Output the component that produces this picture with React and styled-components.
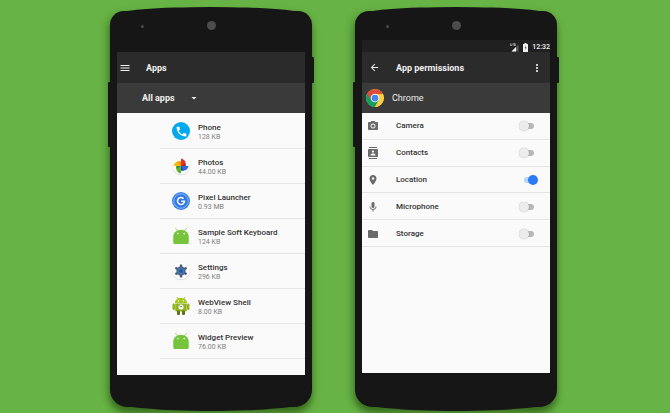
import React from "react";
import styled, { createGlobalStyle, css } from "styled-components";
import {
  MdMenu,
  MdArrowBack,
  MdMoreVert,
  MdArrowDropDown,
  MdCameraAlt,
  MdContacts,
  MdPlace,
  MdMic,
  MdFolder,
  MdPhone,
} from "react-icons/md";

const GlobalStyle = createGlobalStyle`
  *, *::before, *::after { box-sizing: border-box; }
  body {
    margin: 0;
    background: #68b345;
    font-family: Roboto, "Liberation Sans", sans-serif;
    color: #2b2b2b;
  }
`;

const Page = styled.main`
  min-height: 100vh;
  display: flex;
  justify-content: center;
  align-items: flex-start;
  gap: 43px;
  padding: 11px 3px 0 0;
  overflow: hidden;
`;

/* Device body; the pseudo elements bow the top and bottom edges outwards. */
const Device = styled.section`
  position: relative;
  flex: 0 1 202px;
  display: flex;
  flex-direction: column;
  padding: 0 7px;
  background: #161616;
  border-radius: 14px 14px 18px 18px / 14px 14px 17px 17px;
  box-shadow: -3px 2px 8px rgba(20, 60, 0, 0.2), 0 6px 7px rgba(20, 50, 0, 0.5);

  &::before,
  &::after {
    content: "";
    position: absolute;
    background: #161616;
  }
  &::before {
    top: -4px;
    left: 5px;
    right: 5px;
    height: 8px;
    border-radius: 50% 50% 0 0 / 100% 100% 0 0;
  }
  &::after {
    bottom: -4px;
    left: 6px;
    right: 6px;
    height: 9px;
    border-radius: 0 0 50% 50% / 0 0 100% 100%;
  }
`;

const SideKey = styled.span`
  position: absolute;
  width: 3px;
  background: #161616;
  ${(p) =>
    p.$side === "left"
      ? css`
          left: -2px;
          top: 71px;
          height: 65px;
          border-radius: 1px 0 0 1px;
        `
      : css`
          right: -2px;
          top: 46px;
          height: 26px;
          border-radius: 0 1px 1px 0;
        `}
`;

const Forehead = styled.div`
  position: relative;
  z-index: 1;
  height: ${(p) => (p.$short ? 29 : 41)}px;
  display: grid;
  grid-template-columns: 1fr auto 1fr;
  align-items: start;
  padding-top: 10px;
`;

const Sensor = styled.span`
  width: 3px;
  height: 3px;
  margin: 4px 0 0 24px;
  border-radius: 50%;
  background: #484848;
`;

const Earpiece = styled.span`
  width: 9px;
  height: 9px;
  border-radius: 50%;
  background: #4c4c4c;
`;

const Chin = styled.div`
  height: ${(p) => (p.$tall ? 34 : 32)}px;
`;

const Screen = styled.div`
  min-height: ${(p) => (p.$tall ? 333 : 323)}px;
  background: #fafafa;
`;

const StatusBar = styled.div`
  height: 12px;
  display: flex;
  justify-content: flex-end;
  align-items: center;
  gap: 4px;
  padding-top: 3px;
  background: #202020;
  color: #f2f2f2;
  font-size: 7px;
  line-height: 9px;
  font-weight: 500;

  svg {
    display: block;
  }
`;

const Toolbar = styled.header`
  height: 31px;
  display: flex;
  align-items: center;
  gap: ${(p) => p.$gap}px;
  padding: 0 ${(p) => p.$right || 0}px 0 ${(p) => p.$left}px;
  background: #2b2b2b;
  color: #f0f0f0;
`;

const Title = styled.h1`
  flex: 1;
  margin: 0;
  font-size: 9px;
  line-height: 12px;
  font-weight: 700;
  white-space: nowrap;
`;

const IconButton = styled.button`
  display: flex;
  padding: 0;
  border: 0;
  background: none;
  color: inherit;
  font-size: ${(p) => p.$size || 12}px;
  cursor: pointer;
`;

const SubBar = styled.div`
  height: 30px;
  display: flex;
  align-items: center;
  padding-left: ${(p) => p.$left}px;
  gap: 8px;
  background: #3a3a3a;
  color: #ececec;
  font-size: 9px;
  line-height: 12px;
`;

const Filter = styled.label`
  position: relative;
  display: flex;
  align-items: center;
  width: 58px;

  svg {
    position: absolute;
    right: 0;
    font-size: 12px;
    pointer-events: none;
  }
`;

const FilterSelect = styled.select`
  appearance: none;
  width: 100%;
  padding: 0;
  border: 0;
  background: none;
  color: #f0f0f0;
  font: 700 9px/12px Roboto, "Liberation Sans", sans-serif;
`;

const AppList = styled.ul`
  list-style: none;
  margin: 0 0 0 43px;
  padding: 1px 0 0;
`;

const AppRow = styled.li`
  height: 35px;
  display: flex;
  align-items: center;
  gap: 8px;
  padding-left: 12px;
  border-bottom: 1px solid #e6e6e6;

  > svg {
    flex: none;
    overflow: visible;
  }
`;

const AppName = styled.div`
  padding-top: 2px;
  font-size: 8px;
  line-height: 10px;
  font-weight: 500;
  color: #333;
  white-space: nowrap;
`;

const AppSize = styled.div`
  font-size: 7px;
  line-height: 9px;
  color: #808080;
`;

const PermissionList = styled.ul`
  list-style: none;
  margin: 0;
  padding: 0;
  height: 134px;
  display: grid;
  grid-auto-rows: 1fr;
`;

const PermissionRow = styled.li`
  border-bottom: 1px solid #e4e4e4;
`;

const PermissionLabel = styled.label`
  height: 100%;
  display: flex;
  align-items: center;
  gap: 17px;
  padding: 1px 11px 0 5px;
  font-size: 8px;
  line-height: 10px;
  font-weight: 500;
  color: #333;

  > svg {
    flex: none;
    font-size: 12px;
    color: #6a6a6a;
  }
`;

const PermissionName = styled.span`
  flex: 1;
`;

const Switch = styled.input`
  appearance: none;
  position: relative;
  flex: none;
  width: 20px;
  height: 10px;
  margin: 0;
  cursor: pointer;

  &::before {
    content: "";
    position: absolute;
    left: 5px;
    top: 2px;
    width: 10px;
    height: 6px;
    border-radius: 3px;
    background: #b8b8b8;
  }
  &::after {
    content: "";
    position: absolute;
    left: 0;
    top: 0;
    width: 10px;
    height: 10px;
    border-radius: 50%;
    background: #ececec;
    box-shadow: 0 0 1px rgba(0, 0, 0, 0.35);
  }
  &:checked::before {
    background: #b9d5fb;
  }
  &:checked::after {
    left: 9px;
    background: #2a7bf4;
    box-shadow: none;
  }
`;

const PhoneBadge = styled.span`
  flex: none;
  width: 18px;
  height: 18px;
  display: grid;
  place-items: center;
  border-radius: 50%;
  background: #03a9f0;
  color: #fff;
  font-size: 13px;
`;

function PhoneIcon() {
  return (
    <PhoneBadge>
      <MdPhone />
    </PhoneBadge>
  );
}

function WhiteDisc() {
  return (
    <>
      <circle cx="18" cy="19" r="17.5" fill="#dcdcdc" />
      <circle cx="18" cy="18" r="17" fill="#fdfdfd" />
    </>
  );
}

function PhotosIcon() {
  return (
    <svg width="18" height="18" viewBox="0 0 36 36" aria-hidden="true">
      <WhiteDisc />
      <g transform="translate(18 18) scale(1.15) translate(-18 -18)">
        <path d="M18 18V5c5 1 8 4 8 8v5z" fill="#e0352b" />
        <path d="M18 18h13c-1 5-4 8-8 8h-5z" fill="#3468d8" />
        <path d="M18 18v13c-5-1-8-4-8-8v-5z" fill="#5fb52d" />
        <path d="M18 18H5c1-5 4-8 8-8h5z" fill="#fbb90b" />
        <path d="M18 18l8-5v5z" fill="#b8231d" />
        <path d="M18 18l5 8h-5z" fill="#1f48a8" />
        <path d="M18 18l-8 5v-5z" fill="#2f8f35" />
        <path d="M18 18l-5-8h5z" fill="#ef8b10" />
      </g>
    </svg>
  );
}

function LauncherIcon() {
  return (
    <svg width="18" height="18" viewBox="0 0 36 36" aria-hidden="true">
      <circle cx="18" cy="18" r="18" fill="#3b82e6" />
      <circle cx="18" cy="18" r="14.5" fill="none" stroke="#9cc3f5" strokeWidth="1.4" />
      <circle cx="18" cy="18" r="11.5" fill="#2f76df" />
      <path
        d="M23 13.2a7 7 0 1 0 2 5.3h-6.5"
        fill="none"
        stroke="#fff"
        strokeWidth="3"
      />
    </svg>
  );
}

function AndroidIcon() {
  return (
    <svg width="18" height="18" viewBox="0 0 36 36" aria-hidden="true">
      <path d="M7 2.5l5 6M29 2.5l-5 6" stroke="#8fcf5a" strokeWidth="1.6" strokeLinecap="round" />
      <path
        d="M2.5 19.5C2.5 11 9 6 18 6s15.5 5 15.5 13.5V31q0 3-3 3h-25q-3 0-3-3z"
        fill="#76c43c"
      />
      <circle cx="11.5" cy="13" r="1.7" fill="#f4ffe9" />
      <circle cx="24.5" cy="13" r="1.7" fill="#f4ffe9" />
    </svg>
  );
}

function SettingsIcon() {
  return (
    <svg width="18" height="18" viewBox="0 0 36 36" aria-hidden="true">
      <WhiteDisc />
      <g fill="#4e6078">
        {[0, 60, 120].map((angle) => (
          <rect
            key={angle}
            x="15.5"
            y="5"
            width="5"
            height="26"
            rx="1"
            transform={`rotate(${angle} 18 18)`}
          />
        ))}
      </g>
      <circle cx="18" cy="18" r="8" fill="#3f78bd" stroke="#4e6078" strokeWidth="2.5" />
      <circle cx="18" cy="18" r="3.5" fill="#23568f" />
    </svg>
  );
}

function WebViewIcon() {
  return (
    <svg width="18" height="18" viewBox="0 0 36 36" aria-hidden="true">
      <path d="M10 0l3 5M26 0l-3 5" stroke="#8aa51c" strokeWidth="1.5" />
      <path d="M6 12C6 5 11 2 18 2s12 3 12 10z" fill="#a4cb1c" />
      <circle cx="13" cy="7.5" r="1.3" fill="#fff" />
      <circle cx="23" cy="7.5" r="1.3" fill="#fff" />
      <rect x="1" y="13" width="5" height="13" rx="2.5" fill="#8fb51a" />
      <rect x="30" y="13" width="5" height="13" rx="2.5" fill="#8fb51a" />
      <path d="M6.5 13h23v14q0 2-2 2h-19q-2 0-2-2z" fill="#8fb51a" />
      <rect x="10" y="27" width="6" height="9" rx="2" fill="#5d7414" />
      <rect x="20" y="27" width="6" height="9" rx="2" fill="#5d7414" />
      <circle cx="18" cy="20" r="6" fill="#f6f8e6" stroke="#738c18" strokeWidth="1" />
      <path d="M15 17l3 3.5 2-3" fill="none" stroke="#66741f" strokeWidth="1.5" />
    </svg>
  );
}

function ChromeIcon() {
  return (
    <svg width="18" height="18" viewBox="0 0 48 48" aria-hidden="true">
      <circle cx="24" cy="24" r="24" fill="#ffcd40" />
      <path d="M24 24L3.2 12A24 24 0 0 0 24 48l10.4-18z" fill="#16a05d" />
      <path d="M3.2 12A24 24 0 0 1 44.8 13H24L13.6 30z" fill="#e04a3a" />
      <path d="M24 13h20.8A24 24 0 0 1 24 48l10.4-18z" fill="#ffcd40" />
      <circle cx="24" cy="24" r="11.5" fill="#fff" />
      <circle cx="24" cy="24" r="9" fill="#4586f3" />
    </svg>
  );
}

function SignalIcon() {
  return (
    <svg width="9" height="9" viewBox="0 0 18 18" aria-hidden="true">
      <path d="M1 1v4h3V1M11 1H7v2h4v2H7" fill="none" stroke="#bbb" strokeWidth="1.4" />
      <path d="M3 17L17 3v14z" fill="#5c5c5c" />
      <path d="M3 17l9-9v9z" fill="#f4f4f4" />
    </svg>
  );
}

function BatteryIcon() {
  return (
    <svg width="5" height="9" viewBox="0 0 10 18" aria-hidden="true">
      <path d="M3 0h4v2h3v16H0V2h3z" fill="#f4f4f4" />
      <path d="M6 5L3.5 10H5v4l2.5-5H6z" fill="#555" />
    </svg>
  );
}

const APPS = [
  { name: "Phone", size: "128 KB", Icon: PhoneIcon },
  { name: "Photos", size: "44.00 KB", Icon: PhotosIcon },
  { name: "Pixel Launcher", size: "0.93 MB", Icon: LauncherIcon },
  { name: "Sample Soft Keyboard", size: "124 KB", Icon: AndroidIcon },
  { name: "Settings", size: "296 KB", Icon: SettingsIcon },
  { name: "WebView Shell", size: "8.00 KB", Icon: WebViewIcon },
  { name: "Widget Preview", size: "76.00 KB", Icon: AndroidIcon },
];

const PERMISSIONS = [
  { name: "Camera", Icon: MdCameraAlt },
  { name: "Contacts", Icon: MdContacts },
  { name: "Location", Icon: MdPlace, on: true },
  { name: "Microphone", Icon: MdMic },
  { name: "Storage", Icon: MdFolder },
];

function Handset({ tall, children }) {
  return (
    <Device>
      <SideKey $side="left" />
      <SideKey $side="right" />
      <Forehead $short={tall}>
        <Sensor />
        <Earpiece />
      </Forehead>
      <Screen $tall={tall}>{children}</Screen>
      <Chin $tall={tall} />
    </Device>
  );
}

export default function App() {
  return (
    <>
      <GlobalStyle />
      <Page>
        <Handset>
          <Toolbar $left={2} $gap={15}>
            <IconButton type="button" aria-label="Menu">
              <MdMenu />
            </IconButton>
            <Title>Apps</Title>
          </Toolbar>
          <SubBar $left={25}>
            <Filter>
              <FilterSelect aria-label="Filter apps" defaultValue="all">
                <option value="all">All apps</option>
              </FilterSelect>
              <MdArrowDropDown />
            </Filter>
          </SubBar>
          <AppList>
            {APPS.map(({ name, size, Icon }) => (
              <AppRow key={name}>
                <Icon />
                <div>
                  <AppName>{name}</AppName>
                  <AppSize>{size}</AppSize>
                </div>
              </AppRow>
            ))}
          </AppList>
        </Handset>

        <Handset tall>
          <StatusBar>
            <SignalIcon />
            <BatteryIcon />
            <span>12:32</span>
          </StatusBar>
          <Toolbar $left={7} $right={7} $gap={16}>
            <IconButton type="button" aria-label="Back" $size={11}>
              <MdArrowBack />
            </IconButton>
            <Title>App permissions</Title>
            <IconButton type="button" aria-label="More options">
              <MdMoreVert />
            </IconButton>
          </Toolbar>
          <SubBar $left={4}>
            <ChromeIcon />
            <span>Chrome</span>
          </SubBar>
          <PermissionList>
            {PERMISSIONS.map(({ name, Icon, on }) => (
              <PermissionRow key={name}>
                <PermissionLabel>
                  <Icon />
                  <PermissionName>{name}</PermissionName>
                  <Switch type="checkbox" role="switch" defaultChecked={on} />
                </PermissionLabel>
              </PermissionRow>
            ))}
          </PermissionList>
        </Handset>
      </Page>
    </>
  );
}
